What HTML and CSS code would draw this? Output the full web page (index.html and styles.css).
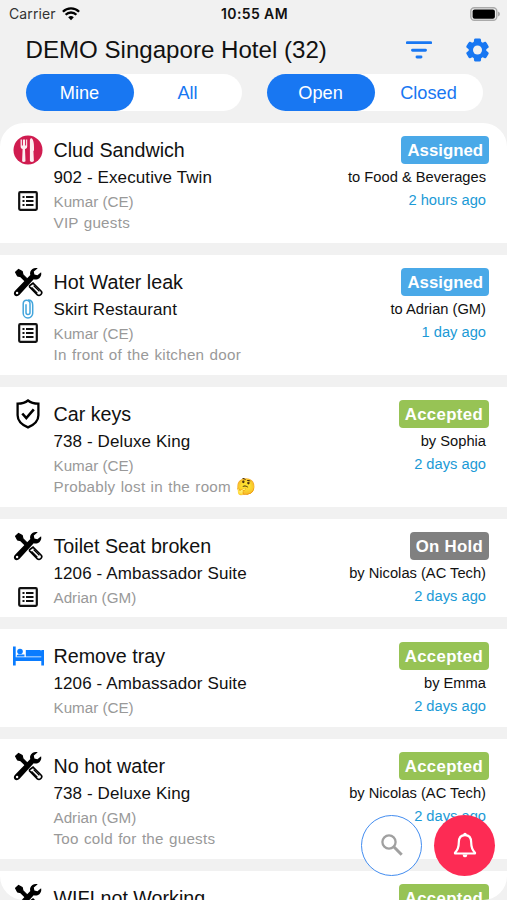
FILE: index.html
```html
<!DOCTYPE html>
<html lang="en">
<head>
<meta charset="utf-8">
<title>DEMO Singapore Hotel</title>
<link rel="stylesheet" href="styles.css">
</head>
<body>
<svg class="defs" aria-hidden="true">
  <symbol id="tools" viewBox="0 0 30 30">
    <path d="M24.6 1.2c-3-.9-6.300.5-7.300 3.500-.4 1.200-.3 2.300 0 3.400L2.300 23.500c-1.800 1.700-1.800 3.700-.6 4.900s3.300 1.100 4.900-.6L20.700 12.300c3.500 1.100 7.300-1.200 7.600-5.400l-.2-1.700-3.700 3-3-.7-.6-3 4-3.300z" fill="#000"/>
    <circle cx="4.100" cy="26" r="1.200" fill="#fff"/>
    <path d="M2.600 5.300l3-2.900 3.600 2.200.7 3.100 5.500 5.500-2 2-5.600-5.500-3.200-.8z" fill="#000" stroke="#000" stroke-width="1.200" stroke-linejoin="round"/>
    <path d="M16.600 18.600l3.400-2.400 8 7.800c1 1 .8 2.500-.1 3.500s-2.500 1.200-3.500.3l-7.800-7.900z" fill="#fff" stroke="#000" stroke-width="1.700"/>
    <path d="M20.600 18.600l5.800 5.800M18.600 20.400l5.700 5.700" stroke="#000" stroke-width="1.300"/>
  </symbol>
  <symbol id="list" viewBox="0 0 20 20">
    <rect x="1.200" y="1.200" width="17.600" height="17.600" rx="1" fill="none" stroke="#111" stroke-width="2.200"/>
    <path d="M4.500 6h2M4.500 10h2M4.500 14h2M8 6h7.500M8 10h7.500M8 14h7.500" stroke="#111" stroke-width="1.900"/>
  </symbol>
  <symbol id="clip" viewBox="0 0 12 20">
    <path d="M8 6v7.500a2 2 0 0 1-4 0V5.200M8 13.500V4.400C8 .2 1.200.2 1.200 5v9.200a4.700 4.700 0 0 0 9.500 0V6C10.700 2.500 8.500.9 6 .9" fill="none" stroke="#43a5dc" stroke-width="1.500"/>
  </symbol>
  <symbol id="food" viewBox="0 0 30 30">
    <circle cx="15" cy="15" r="14.500" fill="#d01c50"/>
    <path d="M7.600 4.500v7c0 1.500.9 2.200 2 2.500l-.5 12.200q1.700 1.600 3.400 0L12 14c1.200-.3 2.200-1 2.200-2.500v-7h-1.100v6h-1v-6h-2.200v6h-1v-6zM16.900 26V5.500q0-2.500 1.800-2.200c2 1.700 2.500 6 2.300 12.200l-.6.5.5 10q-2 1.900-4 0z" fill="#fff" fill-opacity=".93"/>
  </symbol>
  <symbol id="shield" viewBox="0 0 24 30">
    <path d="M12 1.500C9 4 5.500 4.700 1.600 4.700v11.500c0 5.800 4.600 9.700 10.400 12.200 5.800-2.500 10.400-6.400 10.400-12.200V4.700C18.500 4.700 15 4 12 1.500z" fill="none" stroke="#000" stroke-width="2.300"/>
    <path d="M6.300 14.500l4 4.600 7.500-8.800" fill="none" stroke="#000" stroke-width="2.600"/>
  </symbol>
  <symbol id="bed" viewBox="0 0 31 20">
    <path d="M0 .5h2.700v10.800h25.600V4H31v15.500h-2.700V15H2.700v4.500H0zM12.800 4H27q1.300 0 1.300 1.500v5H12.800z" fill="#0a7cff"/>
    <circle cx="7" cy="5.500" r="2.800" fill="#0a7cff"/>
    <path d="M3.500 10.500q0-2 2-2h6v2z" fill="#0a7cff"/>
  </symbol>
</svg>

<div class="status">
  <span class="carrier">Carrier</span>
  <svg class="wifi" viewBox="0 0 18 14"><path d="M9 13.300L6.200 10.300a4 4 0 0 1 5.600 0z"/><path d="M3.600 7.700a7.700 7.700 0 0 1 10.800 0M.9 4.800a11.500 11.500 0 0 1 16.200 0" fill="none" stroke="#000" stroke-width="2.300"/></svg>
  <span class="clock">10:55 AM</span>
  <svg class="battery" viewBox="0 0 30 14"><rect x=".8" y=".8" width="26" height="12.400" rx="3.500" fill="#eee" stroke="#aaa" stroke-width="1.400"/><rect x="2.600" y="2.400" width="22.300" height="9.400" rx="2"/><path d="M28 4.500q2 .8 2 2.500t-2 2.500z" fill="#aaa"/></svg>
</div>

<header class="header">
  <h1>DEMO Singapore Hotel (32)</h1>
  <svg class="filter" viewBox="0 0 26 18"><path d="M1.300 1.600h23.400M6.500 9.200h13M11 16h4" stroke="#1877f2" stroke-width="2.900" stroke-linecap="round"/></svg>
  <svg class="gear" viewBox="0 0 24 24"><path fill="#1877f2" stroke="#1877f2" stroke-width="1.300" stroke-linejoin="round" d="M19.140 12.940c.04-.3.060-.61.060-.94 0-.32-.02-.64-.07-.94l2.030-1.580c.18-.14.230-.41.120-.61l-1.920-3.320c-.12-.22-.37-.29-.59-.22l-2.390.96c-.5-.38-1.030-.7-1.620-.94l-.36-2.540c-.04-.24-.24-.41-.48-.41h-3.840c-.24 0-.43.170-.47.410l-.36 2.540c-.59.240-1.130.57-1.620.94l-2.390-.96c-.22-.08-.47 0-.59.220L2.740 8.870c-.12.210-.08.470.12.610l2.030 1.580c-.05.300-.09.630-.09.940s.02.640.07.940l-2.030 1.580c-.18.140-.23.410-.12.610l1.920 3.320c.12.220.37.290.59.220l2.390-.96c.5.380 1.030.7 1.620.94l.36 2.540c.05.240.24.410.48.410h3.840c.24 0 .44-.17.470-.41l.36-2.540c.59-.24 1.130-.56 1.620-.94l2.390.96c.22.080.47 0 .59-.22l1.920-3.320c.12-.22.070-.47-.12-.61z"/><circle cx="12" cy="12" r="4" fill="#f1f1f1"/></svg>
</header>

<nav class="segments">
  <div class="segment"><span class="option selected">Mine</span><span class="option">All</span></div>
  <div class="segment"><span class="option selected">Open</span><span class="option">Closed</span></div>
</nav>

<main class="jobs">
  <article class="card">
    <div class="icons"><svg class="kind"><use href="#food"/></svg><svg class="list"><use href="#list"/></svg></div>
    <div class="info"><h2>Clud Sandwich</h2><p class="place">902 - Executive Twin</p><p class="person">Kumar (CE)</p><p class="note">VIP guests</p></div>
    <div class="state"><span class="badge assigned">Assigned</span><p class="who">to Food &amp; Beverages</p><p class="when">2 hours ago</p></div>
  </article>
  <article class="card">
    <div class="icons"><svg class="kind"><use href="#tools"/></svg><svg class="clip"><use href="#clip"/></svg><svg class="list"><use href="#list"/></svg></div>
    <div class="info"><h2>Hot Water leak</h2><p class="place">Skirt Restaurant</p><p class="person">Kumar (CE)</p><p class="note">In front of the kitchen door</p></div>
    <div class="state"><span class="badge assigned">Assigned</span><p class="who">to Adrian (GM)</p><p class="when">1 day ago</p></div>
  </article>
  <article class="card">
    <div class="icons"><svg class="kind"><use href="#shield"/></svg></div>
    <div class="info"><h2>Car keys</h2><p class="place">738 - Deluxe King</p><p class="person">Kumar (CE)</p><p class="note">Probably lost in the room <span class="emoji">🤔</span></p></div>
    <div class="state"><span class="badge accepted">Accepted</span><p class="who">by Sophia</p><p class="when">2 days ago</p></div>
  </article>
  <article class="card short">
    <div class="icons"><svg class="kind"><use href="#tools"/></svg><svg class="list"><use href="#list"/></svg></div>
    <div class="info"><h2>Toilet Seat broken</h2><p class="place">1206 - Ambassador Suite</p><p class="person">Adrian (GM)</p></div>
    <div class="state"><span class="badge hold">On Hold</span><p class="who">by Nicolas (AC Tech)</p><p class="when">2 days ago</p></div>
  </article>
  <article class="card short">
    <div class="icons"><svg class="kind bed"><use href="#bed"/></svg></div>
    <div class="info"><h2>Remove tray</h2><p class="place">1206 - Ambassador Suite</p><p class="person">Kumar (CE)</p></div>
    <div class="state"><span class="badge accepted">Accepted</span><p class="who">by Emma</p><p class="when">2 days ago</p></div>
  </article>
  <article class="card">
    <div class="icons"><svg class="kind"><use href="#tools"/></svg></div>
    <div class="info"><h2>No hot water</h2><p class="place">738 - Deluxe King</p><p class="person">Adrian (GM)</p><p class="note">Too cold for the guests</p></div>
    <div class="state"><span class="badge accepted">Accepted</span><p class="who">by Nicolas (AC Tech)</p><p class="when">2 days ago</p></div>
  </article>
  <article class="card">
    <div class="icons"><svg class="kind"><use href="#tools"/></svg></div>
    <div class="info"><h2>WIFI not Working</h2></div>
    <div class="state"><span class="badge accepted">Accepted</span></div>
  </article>
</main>

<div class="actions">
  <div class="fab search"><svg viewBox="0 0 24 24"><circle cx="9" cy="9" r="6.600" fill="none" stroke="#a0a0a0" stroke-width="2.300"/><path d="M14 14l7.700 7.700" stroke="#a0a0a0" stroke-width="3"/></svg></div>
  <div class="fab alert"><svg viewBox="0 0 24 26"><path d="M12 3.200c-4.300 0-6.200 3.300-6.200 7.300 0 5-1 7.500-3.800 10.300v.7h20v-.7c-2.800-2.800-3.800-5.300-3.800-10.300 0-4-1.900-7.300-6.200-7.300z" fill="none" stroke="#fff" stroke-width="2.200" stroke-linejoin="round"/><path d="M10.200 3q0-2.200 1.800-2.200T13.800 3zM9.500 22.500q.3 2.700 2.500 2.700t2.500-2.700z" fill="#fff"/></svg></div>
</div>
</body>
</html>
```

FILE: styles.css
```css
* { box-sizing: border-box; }

body {
  margin: 0;
  width: 507px;
  height: 900px;
  display: flex;
  flex-direction: column;
  overflow: hidden;
  background: #f1f1f1;
  color: #111;
  font-family: "Liberation Sans", Arial, sans-serif;
  white-space: nowrap;
}

h1, h2, p { margin: 0; font-weight: 400; }
svg { display: block; flex: none; }
.defs { position: absolute; width: 0; height: 0; }

.status {
  display: grid;
  grid-template-columns: 48px 1fr 90px 1fr 30px;
  align-items: center;
  height: 27px;
  padding: 0 7px 0 9px;
  font-family: Inter, sans-serif;
  font-size: 14px;
}
.carrier { color: #333; letter-spacing: 0.1px; }
.wifi { width: 18px; height: 14px; margin-left: 5px; }
.clock {
  margin-left: -18px;
  font-weight: 600;
  letter-spacing: 0.4px;
  text-align: center;
}
.battery { grid-column: 5; width: 30px; height: 14px; }

.header {
  display: flex;
  align-items: center;
  height: 45px;
  padding: 0 16px 0 25.500px;
}
.header h1 { flex: 1; font-size: 24.1px; line-height: 45px; }
.filter { width: 26px; height: 18px; margin-right: 32px; }
.gear { width: 27px; height: 30px; }

.segments {
  display: flex;
  justify-content: space-between;
  padding: 2px 24.500px 0 25.500px;
  height: 51px;
}
.segment {
  display: flex;
  width: 216px;
  height: 37px;
  border-radius: 19px;
  background: #fff;
}
.option {
  flex: 1;
  border-radius: 19px;
  color: #1877f2;
  font-size: 18.2px;
  line-height: 38px;
  text-align: center;
}
.selected { background: #1877f2; color: #fff; }

.jobs {
  flex: none;
  display: flex;
  flex-direction: column;
  gap: 12px;
  height: 777px;
  overflow: hidden;
  border-radius: 24px;
}
.card {
  flex: none;
  display: flex;
  height: 120px;
  padding: 12.500px 18px 0 12.500px;
  background: #fff;
}
.short { height: 98px; }

.icons {
  display: grid;
  grid-template-rows: 28px 26px 23px;
  justify-items: center;
  align-items: center;
  width: 31px;
  margin-right: 10px;
  height: 77px;
}
.kind { grid-row: 1; width: 30px; height: 30px; }
.bed { width: 31px; height: 20px; }
.clip { grid-row: 2; width: 12px; height: 20px; }
.list { grid-row: 3; width: 20px; height: 20px; }

.info { flex: 1; }
.info h2 { font-size: 19.700px; line-height: 28px; }
.place { font-size: 17px; line-height: 27px; letter-spacing: 0.1px; }
.person { color: #999; font-size: 15.200px; line-height: 22px; }
.note {
  color: #999;
  font-size: 15.200px;
  line-height: 20px;
  letter-spacing: 0.25px;
  word-spacing: 0.8px;
}
.emoji { font-size: 16px; line-height: 1; }

.state { display: flex; flex-direction: column; align-items: flex-end; }
.badge {
  height: 28px;
  padding: 0 6px;
  border-radius: 4px;
  color: #fff;
  font-size: 16.800px;
  font-weight: 700;
  line-height: 29px;
}
.assigned { background: #4aa9e8; }
.accepted { background: #97c355; letter-spacing: 0.35px; }
.hold { background: #808080; letter-spacing: 0.3px; }
.who, .when { margin-right: 3px; font-size: 14.700px; }
.who { line-height: 26px; }
.when { color: #1b9ad6; line-height: 21px; }

.actions {
  position: absolute;
  right: 12px;
  bottom: 24.500px;
  display: flex;
  gap: 12px;
}
.fab {
  display: flex;
  align-items: center;
  justify-content: center;
  width: 61px;
  height: 61px;
  border-radius: 50%;
}
.search { background: #fff; border: 1.500px solid #438df0; }
.search svg { width: 24px; height: 24px; }
.alert { background: #fd2b54; }
.alert svg { width: 24px; height: 26px; }
```
